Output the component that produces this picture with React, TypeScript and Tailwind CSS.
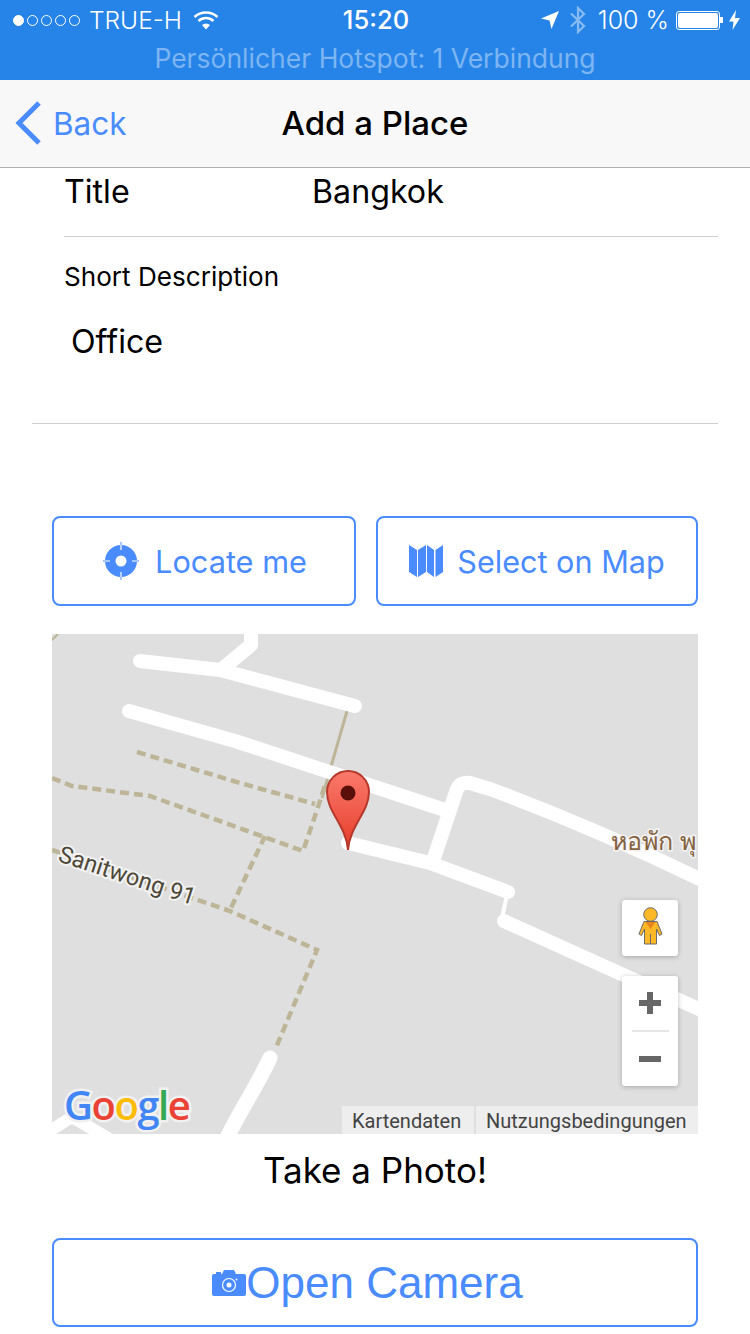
const BLUE = 'text-[#4a8cff]'

function StatusBar() {
  return (
    <div className="h-20 bg-[#2684e8] text-white shrink-0">
      <div className="relative h-10 flex items-center pl-[13px] pr-[10px] text-[24.5px] leading-none">
        <div className="flex gap-[3px]">
          <span className="size-[11px] rounded-full bg-white border border-white" />
          {[0, 1, 2, 3].map(i => (
            <span key={i} className="size-[11px] rounded-full border border-white" />
          ))}
        </div>
        <span className="ml-[9px] font-light">TRUE-H</span>
        <svg className="ml-[11px]" width="26" height="20" viewBox="0 0 26 20" fill="none" stroke="white" strokeWidth="2.6">
          <path d="M1.500 7 C8 1 18 1 24.500 7" />
          <path d="M5.500 11 C10 7 16 7 20.500 11" />
          <path d="M13 19.500 L9 15 C11.500 13 14.500 13 17 15 Z" fill="white" stroke="none" />
        </svg>
        <span className="absolute left-[2px] right-0 text-center font-medium text-[25.5px]">15:20</span>
        <div className="ml-auto flex items-center">
          <svg width="18" height="18" viewBox="0 0 18 18" fill="white">
            <path d="M18 0 L10.500 18 L8.500 9.500 L0 7.500 Z" />
          </svg>
          <svg className="ml-[11px]" width="16" height="28" viewBox="0 0 16 28" fill="none" stroke="white" strokeOpacity="0.45" strokeWidth="2.2">
            <path d="M1 7.500 L14 20 L8 26 V2 L14 8 L1 20.500" />
          </svg>
          <span className="ml-[12px] font-light text-[25px]">100 %</span>
          <div className="ml-[7px] flex items-center">
            <div className="w-[44px] h-[19px] rounded-[3px] border border-white p-[1px]">
              <div className="w-full h-full rounded-[2px] bg-white" />
            </div>
            <span className="w-[3px] h-[6px] bg-white" />
          </div>
          <svg className="ml-[6px]" width="11" height="20" viewBox="0 0 11 20" fill="white">
            <path d="M7 0 L0 11.500 H4.500 L3.500 20 L11 8 H6 Z" />
          </svg>
        </div>
      </div>
      <div className="h-10 flex items-center justify-center text-[26.5px] leading-none text-[#7db5f2] pb-1">
        Persönlicher Hotspot: 1 Verbindung
      </div>
    </div>
  )
}

function NavBar() {
  return (
    <div className="relative h-[88px] shrink-0 bg-[#f8f8f8] border-b border-[#b2b2b2] flex items-center">
      <svg className="ml-[15px] mb-[1px]" width="26" height="44" viewBox="0 0 26 44" fill="none" stroke="#4a8cff" strokeWidth="5">
        <path d="M24 2 L4 22 L24 42" />
      </svg>
      <span className={`ml-[12px] text-[31.5px] leading-none ${BLUE}`}>Back</span>
      <span className="absolute left-0 right-0 text-center text-[33px] leading-none font-medium text-black">
        Add a Place
      </span>
    </div>
  )
}

function MapView() {
  const dash = { stroke: '#bdb597', strokeWidth: 4.5, strokeDasharray: '9 5', fill: 'none' }
  const road = { stroke: '#fff', strokeLinecap: 'round' as const, strokeLinejoin: 'round' as const, fill: 'none' }
  return (
    <div className="relative mx-[52px] w-[646px] h-[500px] bg-[#dfdfdf] overflow-hidden">
      <svg width="646" height="500" viewBox="52 634 646 500">
        <defs>
          <linearGradient id="pin" x1="0" y1="0" x2="0" y2="1">
            <stop offset="0" stopColor="#fa7a6d" />
            <stop offset="1" stopColor="#e63c28" />
          </linearGradient>
        </defs>
        <path d="M52 640 L58 634" stroke="#bdb597" strokeWidth="2" />
        <path d="M347 711 L322 798" stroke="#bdb597" strokeWidth="3" fill="none" />
        <path d="M137 752 L240 783 L315 804" {...dash} />
        <path d="M52 778 L72 786 L150 796 L303 851 L317 810 L326 782" {...dash} />
        <path d="M265 836 L230 910" {...dash} />
        <path d="M52 850 L230 911 L317 950 L275 1050" {...dash} />
        <g {...road} strokeWidth="14">
          <path d="M140 661 L220 670 L355 706" />
          <path d="M251 628 L251 645 L222 669" />
          <path d="M129 711 L235 741 L445 810" />
          <path d="M434 858 L456 792 Q459 781 470 783 L490 789 C560 815 630 845 710 884" />
          <path d="M348 843 L430 863 L508 892" />
          <path d="M504 921 L710 1014" />
          <path d="M270 1058 C255 1090 240 1110 225 1142" strokeWidth="15" />
          <path d="M48 1132 L72 1117 L115 1142" strokeWidth="12" />
        </g>
        <path d="M507 895 L502 918" stroke="#fff" strokeWidth="4" />
        <text
          x="57"
          y="861"
          transform="rotate(18 57 861)"
          fontFamily="Roboto, sans-serif"
          fontSize="23.5"
          fill="#4d4838"
          stroke="#f2f2f2"
          strokeWidth="4"
          paintOrder="stroke"
        >
          Sanitwong 91
        </text>
        <text
          x="611"
          y="850"
          fontFamily="'Noto Sans', 'DejaVu Sans', sans-serif"
          fontSize="25"
          fill="#85623f"
          stroke="#f2f2f2"
          strokeWidth="3"
          paintOrder="stroke"
        >
          หอพัก พุ
        </text>
        <path
          d="M348 850 C346 825 327 812 327 792 A21 21 0 0 1 369 792 C369 812 350 825 348 850 Z"
          fill="url(#pin)"
          stroke="#b5382b"
          strokeWidth="2"
        />
        <circle cx="348" cy="793" r="7.500" fill="#5b0f0a" />
        <text
          x="64"
          y="1120"
          fontFamily="'Open Sans', sans-serif"
          fontSize="40"
          fontWeight="600"
          stroke="#f1f1f1"
          strokeWidth="5"
          paintOrder="stroke"
          letterSpacing="-1.5"
        >
          <tspan fill="#4285f4">G</tspan>
          <tspan fill="#ea4335">o</tspan>
          <tspan fill="#fbbc05">o</tspan>
          <tspan fill="#4285f4">g</tspan>
          <tspan fill="#34a853">l</tspan>
          <tspan fill="#ea4335">e</tspan>
        </text>
      </svg>

      {/* Street view button */}
      <div className="absolute left-[570px] top-[266px] size-14 bg-white rounded-[3px] shadow-[0_1px_5px_rgba(0,0,0,0.25)] flex items-center justify-center pb-[4px]">
        <svg width="25" height="38" viewBox="0 0 25 38" fill="#fdb827" stroke="#6b6b6b" strokeWidth="1">
          <circle cx="12.500" cy="7.500" r="6.800" />
          <path d="M6 14.500 H19 L24 27 L21.500 28.500 L18.500 22 V37 H6.500 V22 L3.500 28.500 L1 27 Z" />
          <path d="M12.500 37 V27" fill="none" />
          <path d="M7.500 15 H17.500 L12.500 22 Z" fill="#e8861e" stroke="none" />
        </svg>
      </div>

      {/* Zoom buttons */}
      <div className="absolute left-[570px] top-[342px] w-14 h-[110px] bg-white rounded-[3px] shadow-[0_1px_5px_rgba(0,0,0,0.25)] flex flex-col items-center">
        <div className="h-[54px] flex items-center justify-center">
          <svg width="22" height="22" viewBox="0 0 22 22" fill="#666">
            <path d="M8 0 H14 V8 H22 V14 H14 V22 H8 V14 H0 V8 H8 Z" />
          </svg>
        </div>
        <div className="w-[37px] h-[2px] bg-[#e6e6e6]" />
        <div className="flex-1 flex items-center justify-center">
          <svg width="22" height="6" viewBox="0 0 22 6" fill="#666">
            <rect width="22" height="6" />
          </svg>
        </div>
      </div>

      {/* Attribution */}
      <div className="absolute right-0 bottom-0 h-7 flex gap-[2px] text-[20px] leading-none text-[#444] font-['Roboto',sans-serif]">
        <div className="w-[132px] bg-[#eeeeee] flex items-center pl-[10px] pt-[1px]">Kartendaten</div>
        <div className="w-[222px] bg-[#eeeeee] flex items-center pl-[10px] pt-[1px]">Nutzungsbedingungen</div>
      </div>
    </div>
  )
}

export default function App() {
  return (
    <div className="w-[750px] h-[1334px] bg-white overflow-hidden flex flex-col font-['Inter','Liberation_Sans',sans-serif] text-black">
      <StatusBar />
      <NavBar />

      <div className="ml-[64px] mr-8 h-[69px] border-b border-[#cfcfcf] flex items-center pb-[19px] text-[32.2px] leading-none">
        <span className="w-[248px]">Title</span>
        <span>Bangkok</span>
      </div>
      <div className="ml-8 mr-8 h-[187px] border-b border-[#cfcfcf] pl-[32px] pt-[27px]">
        <div className="text-[26.1px] leading-none">Short Description</div>
        <div className="mt-[36px] ml-[7px] text-[32.2px] leading-none">Office</div>
      </div>

      <div className="mt-[92px] mx-[52px] flex gap-5 h-[90px]">
        <button className={`w-[304px] rounded-lg border-2 border-[#4a8cff] bg-white flex items-center justify-center gap-[16px] pl-[2px] text-[30.7px] leading-none ${BLUE}`}>
          <svg width="36" height="38" viewBox="0 0 36 38" fill="#4a8cff">
            <path
              fillRule="evenodd"
              d="M18 3 A16 16 0 1 0 18 35 A16 16 0 1 0 18 3 Z M18 13.500 A5.500 5.500 0 1 1 18 24.500 A5.500 5.500 0 1 1 18 13.500 Z"
            />
            <path d="M18 3 V8 M18 30 V35 M2 19 H7 M29 19 H34" stroke="#fff" strokeWidth="1.200" />
            <path d="M18 0 V3 M18 35 V38 M0 19 H2 M34 19 H36" stroke="#4a8cff" strokeWidth="1" />
          </svg>
          <span className="mt-[2px]">Locate me</span>
        </button>
        <button className={`w-[322px] rounded-lg border-2 border-[#4a8cff] bg-white flex items-center justify-center gap-[14px] text-[30.6px] leading-none ${BLUE}`}>
          <svg width="34" height="33" viewBox="0 0 34 33" fill="#4a8cff">
            <path d="M0 0 L8 5 V32 L0 27 Z" />
            <path d="M9 5 L17 0 V27 L9 32 Z" />
            <path d="M18 0 L25 5 V32 L18 27 Z" />
            <path d="M26.500 5 L34 0 V27 L26.500 32 Z" />
          </svg>
          <span className="mt-[3px]">Select on Map</span>
        </button>
      </div>

      <div className="mt-7">
        <MapView />
      </div>

      <div className="mt-[16px] text-center text-[35px] leading-[40px]">Take a Photo!</div>

      <button className={`mt-[48px] mx-[52px] h-[89px] shrink-0 rounded-lg border-2 border-[#4a8cff] bg-white flex items-center justify-center pr-[15px] text-[44px] leading-none font-['Liberation_Sans',sans-serif] ${BLUE}`}>
        <svg width="34" height="26" viewBox="0 0 34 26" fill="#4a8cff">
          <path d="M2 4 H4 V2 H9 V4 H10 L12 0 H22 L24 4 H32 Q34 4 34 6 V24 Q34 26 32 26 H2 Q0 26 0 24 V6 Q0 4 2 4 Z" />
          <circle cx="17" cy="15" r="6.500" fill="none" stroke="#fff" strokeWidth="1.200" />
          <circle cx="17" cy="15" r="2.500" fill="#fff" />
          <circle cx="24.500" cy="9.500" r="0.900" fill="#fff" />
        </svg>
        Open Camera
      </button>
    </div>
  )
}
